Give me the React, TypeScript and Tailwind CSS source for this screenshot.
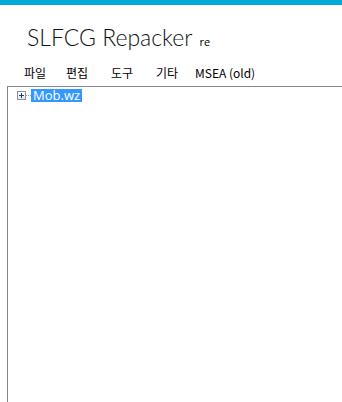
import React from "react";

const menuItems = [
  { label: "파일", w: "w-[42px]" },
  { label: "편집", w: "w-[45px]" },
  { label: "도구", w: "w-[45px]" },
  { label: "기타", w: "w-[39px]" },
  { label: "MSEA (old)", w: "" },
];

const App = () => {
  return (
    <div className="w-[342px] h-[402px] bg-white flex flex-col overflow-hidden" style={{ fontFamily: '"Segoe UI", "Open Sans", "Noto Sans CJK KR", sans-serif' }}>
      {/* title bar accent */}
      <div className="h-[5px] bg-[#00aad8] shrink-0" />

      {/* title */}
      <div className="flex items-baseline pl-[27px] pt-[21px] h-[55px] shrink-0">
        <span className="text-[23px] font-light leading-none text-[#111]" style={{ fontFamily: 'Lato, "Open Sans", sans-serif' }}>SLFCG Repacker</span>
        <span className="text-[11px] ml-[7px] text-black leading-none">re</span>
      </div>

      {/* menu */}
      <div className="flex items-center pl-[24px] h-[26px] shrink-0 text-[12px] text-black" style={{ fontFamily: '"Noto Sans CJK KR", "Open Sans", sans-serif' }}>
        {menuItems.map((item, idx) => (
          <span key={idx} className={`${item.w} leading-none`}>{item.label}</span>
        ))}
      </div>

      {/* tree view */}
      <div className="flex-1 ml-[7px] border-l border-t border-[#828790] pt-[1px]">
        <div className="flex items-center h-[13px] mt-[1px]">
          <div className="ml-[9px] w-[9px] h-[9px] border border-[#919191] bg-gradient-to-b from-white to-[#e6e6e6] flex items-center justify-center">
            <svg width="7" height="7" viewBox="0 0 7 7">
              <path d="M1 3.5h5M3.5 1v5" stroke="#1f3b78" strokeWidth="1" />
            </svg>
          </div>
          <div className="w-[5px] border-t border-dotted border-[#a0a0a0]" />
          <span className="bg-[#3399ff] text-white text-[13px] leading-[13px] h-[13px] px-[2px]" style={{ fontFamily: '"Open Sans", sans-serif' }}>Mob.wz</span>
        </div>
      </div>
    </div>
  );
};

export default App;
